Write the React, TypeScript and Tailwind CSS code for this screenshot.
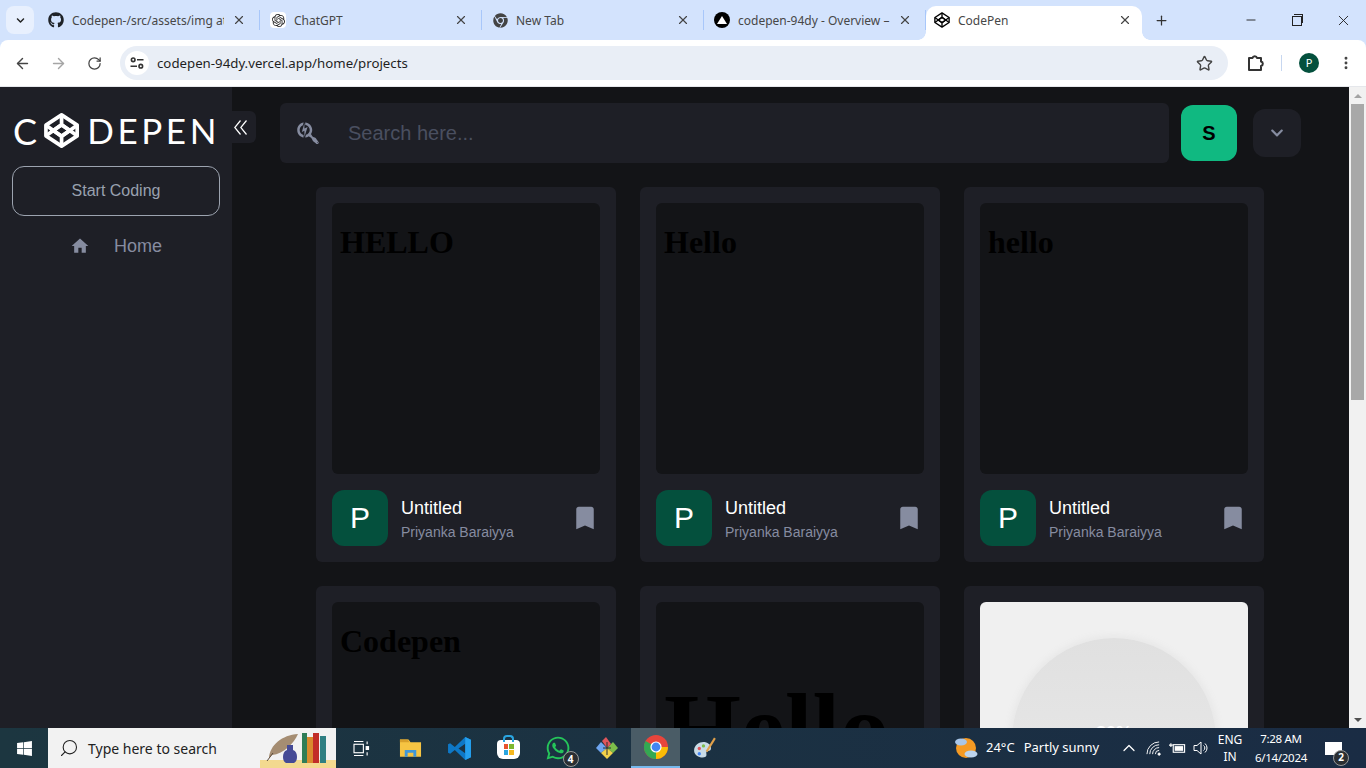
import { ArrowLeft, ArrowRight, ChevronUp, Minus, MoreVertical, Plus, RotateCw, Search, Star, X } from 'lucide-react';
import { FaChevronDown, FaChrome, FaGithub, FaSearchengin, FaWhatsapp, FaWindows } from 'react-icons/fa';
import { MdBookmark, MdHome } from 'react-icons/md';
import { SiOpenai } from 'react-icons/si';

const chromeFont = { fontFamily: '"Noto Sans", sans-serif' };

function CodepenMark({ className, strokeWidth = 2 }: { className?: string; strokeWidth?: number }) {
  return (
    <svg viewBox="0 0 36 36" className={className} fill="none" stroke="currentColor" strokeWidth={strokeWidth} strokeLinejoin="round">
      <path d="M18 2 34 12.5V23.5L18 34 2 23.5V12.5Z" />
      <path d="M18 12 26.5 18 18 24 9.5 18Z" />
      <path d="M18 2V12M18 24V34M2 12.5 18 24M34 12.5 18 24M2 23.5 18 12M34 23.5 18 12" />
    </svg>
  );
}

function Tab({ title, icon, active }: { title: string; icon: React.ReactNode; active?: boolean }) {
  if (active) {
    return (
      <div className="relative flex items-center w-[216px] h-[34px] pb-[6px] pl-2 pr-[10px] gap-2 bg-white rounded-t-[10px]">
        <div className="absolute -left-2 bottom-0 w-2 h-2 bg-[radial-gradient(circle_at_0_0,transparent_7.5px,white_8px)]" />
        <div className="absolute -right-2 bottom-0 w-2 h-2 bg-[radial-gradient(circle_at_100%_0,transparent_7.5px,white_8px)]" />
        <div className="w-4 h-4 flex items-center justify-center shrink-0">{icon}</div>
        <div className="flex-1 overflow-hidden whitespace-nowrap text-xs text-[#474747] mt-[2px]">{title}</div>
        <X size={14} strokeWidth={2} className="text-[#444] shrink-0" />
      </div>
    );
  }
  return (
    <div className="flex items-center w-[222px] h-[34px] pb-[6px] pl-[10px] pr-3 gap-2">
      <div className="w-4 h-4 flex items-center justify-center shrink-0">{icon}</div>
      <div className="flex-1 overflow-hidden whitespace-nowrap text-xs text-[#474747] mt-[2px]">{title}</div>
      <X size={14} strokeWidth={2} className="text-[#444] shrink-0" />
      <div className="w-px h-5 bg-[#a8c7fa] -mr-3 ml-[5px]" />
    </div>
  );
}

function TabStrip() {
  return (
    <div className="flex items-end h-10 pl-[6px]" style={chromeFont}>
      <div className="w-7 h-7 mb-[6px] mr-1 rounded-lg bg-[#e8f0fe] flex items-center justify-center">
        <FaChevronDown size={9} className="text-[#222]" />
      </div>
      <Tab title="Codepen-/src/assets/img at" icon={<FaGithub size={16} className="text-[#1f2328]" />} />
      <Tab title="ChatGPT" icon={<div className="w-4 h-4 bg-white rounded-sm flex items-center justify-center"><SiOpenai size={13} className="text-[#222]" /></div>} />
      <Tab title="New Tab" icon={<FaChrome size={15} className="text-[#444]" />} />
      <Tab
        title="codepen-94dy - Overview –"
        icon={
          <div className="w-4 h-4 bg-black rounded-full flex items-center justify-center">
            <div className="w-0 h-0 border-l-[5px] border-r-[5px] border-b-[8px] border-l-transparent border-r-transparent border-b-white" />
          </div>
        }
      />
      <Tab title="CodePen" active icon={<CodepenMark className="w-4 h-4 text-black" strokeWidth={3} />} />
      <div className="w-[38px] h-[34px] pb-[6px] flex items-center justify-center">
        <Plus size={15} strokeWidth={2} className="text-[#333]" />
      </div>
      <div className="ml-auto flex h-10 items-center text-[#222]">
        <div className="w-[46px] flex justify-center"><Minus size={14} strokeWidth={1.6} /></div>
        <div className="w-[46px] flex justify-center">
          <div className="relative w-[10px] h-[10px] border border-[#222] mt-[2px]">
            <div className="absolute -top-[3px] left-[1px] w-[9px] h-[9px] border-t border-r border-[#222]" />
          </div>
        </div>
        <div className="w-[46px] flex justify-center"><X size={17} strokeWidth={1.3} /></div>
      </div>
    </div>
  );
}

function Toolbar() {
  return (
    <div className="flex items-center h-[47px] bg-white rounded-t-lg border-b border-[#e5e7eb]" style={chromeFont}>
      <div className="w-[44px] flex justify-center"><ArrowLeft size={17} strokeWidth={2} className="text-[#444]" /></div>
      <div className="w-[28px] flex justify-center"><ArrowRight size={17} strokeWidth={2} className="text-[#a5a5a5]" /></div>
      <div className="w-[44px] flex justify-center"><RotateCw size={15} strokeWidth={2} className="text-[#444]" /></div>
      <div className="flex items-center w-[1108px] h-[34px] ml-1 rounded-full bg-[#e9eef6] pl-[5px] pr-[15px]">
        <div className="w-6 h-6 rounded-full bg-white flex items-center justify-center">
          <svg viewBox="0 0 14 14" className="w-[14px] h-[14px]" fill="none" stroke="#333" strokeWidth="1.6">
            <circle cx="3.2" cy="3.8" r="1.8" />
            <path d="M7 3.800h6.500M.5 10.200H7" />
            <circle cx="10.800" cy="10.200" r="1.8" />
          </svg>
        </div>
        <div className="ml-2 flex-1 text-[13.25px] text-[#1f1f1f] mt-[2px]">codepen-94dy.vercel.app/home/projects</div>
        <Star size={17} strokeWidth={2} className="text-[#444]" />
      </div>
      <div className="w-[52px] ml-[1px] flex justify-center">
        <svg viewBox="0 0 18 18" className="w-[18px] h-[18px]" fill="none" stroke="#333" strokeWidth="2" strokeLinejoin="round">
          <path d="M3 4h3.500a2.300 2.300 0 0 1 4.500 0H15v3.500a2.300 2.300 0 0 1 0 4.500V16H3z" />
        </svg>
      </div>
      <div className="w-px h-4 bg-[#c7d7f0]" />
      <div className="w-[54px] flex justify-center">
        <div className="w-5 h-5 rounded-full bg-[#04503d] text-white text-[11px] flex items-center justify-center">P</div>
      </div>
      <div className="w-[20px] flex justify-center"><MoreVertical size={16} strokeWidth={2.4} className="text-[#444]" /></div>
    </div>
  );
}

function Sidebar() {
  return (
    <aside className="relative z-10 w-[232px] shrink-0 bg-[#1e1f26] px-3 pt-[25px]">
      <div className="flex items-center h-[37px] pl-[1px] text-white font-normal whitespace-nowrap" style={{ fontFamily: 'Lato, sans-serif' }}>
        <span className="text-[36px] leading-none">C</span>
        <CodepenMark className="w-[37px] h-[37px] ml-[7px] text-white" strokeWidth={3.8} />
        <span className="text-[35px] leading-none tracking-[3.6px] ml-2">DEPEN</span>
      </div>
      <div className="absolute top-6 -right-6 w-6 h-8 bg-[#1e1f26] rounded-r-md flex items-center pl-[2px]">
        <svg viewBox="0 0 13 15" className="w-[13px] h-[15px]" fill="none" stroke="white" strokeWidth="1.2">
          <path d="M6.500.5 0.800 7.500 6.500 14.500M12.500.5 6.800 7.500 12.500 14.500" />
        </svg>
      </div>
      <div className="mt-[17px] h-[50px] rounded-xl border border-[#9ca3af] flex items-center justify-center text-gray-400">
        Start Coding
      </div>
      <div className="mt-4 flex items-center gap-6 pl-[58px] text-[#868ca0] text-lg">
        <MdHome size={20} />
        <span>Home</span>
      </div>
    </aside>
  );
}

interface ProjectCardProps {
  preview: React.ReactNode;
  previewClass?: string;
}

function ProjectCard({ preview, previewClass }: ProjectCardProps) {
  return (
    <div className="w-[300px] h-[375px] p-4 bg-[#1e1f26] rounded-md flex flex-col gap-4">
      <div className={`h-[271px] rounded-md overflow-hidden ${previewClass ?? 'bg-[#131417]'}`} style={{ fontFamily: '"Liberation Serif", serif' }}>
        {preview}
      </div>
      <div className="flex items-center h-14">
        <div className="w-14 h-14 rounded-xl bg-[#04503d] text-white text-3xl flex items-center justify-center">P</div>
        <div className="ml-[13px] flex-1">
          <p className="text-white text-lg leading-[26px] mt-[1px]">Untitled</p>
          <p className="text-[#868ca0] text-sm mt-[1px]">Priyanka Baraiyya</p>
        </div>
        <MdBookmark size={30} className="text-[#868ca0]" />
      </div>
    </div>
  );
}

function Heading({ text }: { text: string }) {
  return <h1 className="pt-[21px] pl-2 text-[32px] font-bold text-black leading-[37px]">{text}</h1>;
}

function Main() {
  return (
    <main className="flex-1 min-w-0 bg-[#131417] px-12 pt-4 overflow-hidden">
      <div className="flex items-center h-[60px]">
        <div className="flex-1 h-[60px] bg-[#1e1f26] rounded-md flex items-center pl-4 gap-7">
          <FaSearchengin size={24} className="text-[#868ca0] shrink-0" />
          <input placeholder="Search here..." className="flex-1 bg-transparent text-xl outline-none placeholder:text-[#4a4f60]" />
        </div>
        <div className="ml-3 w-14 h-14 rounded-xl bg-[#10b981] flex items-center justify-center text-black text-xl font-semibold">S</div>
        <div className="ml-4 w-12 h-12 rounded-xl bg-[#1e1f26] flex items-center justify-center">
          <FaChevronDown size={14} className="text-[#868ca0]" />
        </div>
      </div>

      <div className="mt-6 pl-9 grid grid-cols-[repeat(3,300px)] gap-6">
        <ProjectCard preview={<Heading text="HELLO" />} />
        <ProjectCard preview={<Heading text="Hello" />} />
        <ProjectCard preview={<Heading text="hello" />} />
        <ProjectCard preview={<Heading text="Codepen" />} />
        <ProjectCard preview={<h1 className="pt-[71px] pl-2 text-[99px] font-bold text-black leading-[112px]">Hello</h1>} />
        <ProjectCard
          previewClass="bg-[#f0f0f0]"
          preview={
            <div className="mt-[36px] mx-auto w-[204px] h-[204px] rounded-full bg-gradient-to-b from-[#e0e0e0] to-[#ebebeb] shadow-[0_0_6px_3px_#e8e8e8] pt-[81px] text-center text-white text-lg font-bold" style={{ fontFamily: '"Liberation Sans", sans-serif' }}>
              30%
            </div>
          }
        />
      </div>
    </main>
  );
}

function Scrollbar() {
  return (
    <div className="w-[17px] shrink-0 bg-[#f1f1f1] flex flex-col">
      <div className="h-[17px] flex items-center justify-center">
        <div className="w-0 h-0 border-l-4 border-r-4 border-b-4 border-l-transparent border-r-transparent border-b-[#a3a3a3]" />
      </div>
      <div className="h-[296px] mx-[2px] bg-[#a8a8a8]" />
      <div className="flex-1" />
      <div className="h-[17px] flex items-center justify-center">
        <div className="w-0 h-0 border-l-4 border-r-4 border-t-4 border-l-transparent border-r-transparent border-t-[#505050]" />
      </div>
    </div>
  );
}

function BooksArt() {
  return (
    <svg viewBox="0 0 76 40" className="w-[76px] h-10 shrink-0">
      <rect x="0" y="32" width="76" height="8" fill="#f3d98f" />
      <path d="M9 30C10 17 22 7 38 6 34 15 24 26 12 27Z" fill="#a58d72" />
      <path d="M7 33 13 25" stroke="#5b4a3a" strokeWidth="1" />
      <path d="M27 17h6v5c3 1 4 4 4 7 0 3-1 5-3 6h-8c-2-1-3-3-3-6 0-3 1-6 4-7z" fill="#454a96" />
      <rect x="42" y="5" width="5" height="30" fill="#2f7d57" />
      <rect x="47" y="9" width="6" height="26" fill="#d98a2e" />
      <rect x="53" y="5" width="6" height="30" fill="#c22d28" />
      <rect x="60" y="8" width="6" height="27" fill="#2f7f82" />
    </svg>
  );
}

function TaskIcon({ children }: { children: React.ReactNode }) {
  return <div className="w-[49px] h-10 flex items-center justify-center">{children}</div>;
}

function Taskbar() {
  return (
    <div className="flex items-center h-10 bg-gradient-to-r from-[#1c3640] to-[#1a2c44] text-white" style={chromeFont}>
      <div className="w-12 flex justify-center"><FaWindows size={17} /></div>
      <div className="w-[288px] h-10 bg-[#f2f2f2] flex items-center pl-[11px] text-[#222]">
        <Search size={20} strokeWidth={1.3} className="-scale-x-100 mr-[9px]" />
        <span className="text-[14px] flex-1">Type here to search</span>
        <BooksArt />
      </div>
      <div className="ml-[1px] flex">
        <TaskIcon>
          <svg viewBox="0 0 18 16" className="w-[17px] h-[15px]" fill="none" stroke="white" strokeWidth="1.2">
            <path d="M1 .5h10M1 15.500h10" />
            <rect x="1" y="3.500" width="10" height="9" />
            <path d="M15 .5v3M15 12v3.500" />
            <rect x="14" y="6" width="2.500" height="3" fill="white" />
          </svg>
        </TaskIcon>
        <TaskIcon>
          <svg viewBox="0 0 24 20" className="w-[23px] h-[20px]">
            <path d="M1 1h9l2 3h11v15H1z" fill="#f6c443" />
            <path d="M1 1h8l2 3H1z" fill="#d9a02b" />
            <path d="M6 19v-7h12v7h-3v-4H9v4z" fill="#3f97d9" />
          </svg>
        </TaskIcon>
        <TaskIcon>
          <svg viewBox="0 0 24 24" className="w-[25px] h-[25px]">
            <path d="M17.500 1 7.500 10.500 3 7 1 8v8l2 1 4.500-3.500L17.500 23 23 20.500v-17zM17.500 7.500 11 12l6.500 4.500z" fillRule="evenodd" fill="#0e78c6" />
            <path d="M17.500 1 23 3.500v17L17.500 23z" fill="#25a0ee" />
          </svg>
        </TaskIcon>
        <TaskIcon>
          <div className="relative w-[23px] h-[19px] mt-[3px] bg-white rounded-b-md rounded-t-sm flex items-center justify-center">
            <div className="absolute -top-[5px] left-[6px] w-[11px] h-[7px] border-2 border-b-0 border-[#2aa5e0] rounded-t-sm" />
            <div className="grid grid-cols-2 gap-px w-[10px]">
              <div className="h-[5px] bg-[#e8532c]" />
              <div className="h-[5px] bg-[#7db72f]" />
              <div className="h-[5px] bg-[#2aa5e0]" />
              <div className="h-[5px] bg-[#f6b81f]" />
            </div>
          </div>
        </TaskIcon>
        <TaskIcon>
          <div className="relative">
            <FaWhatsapp size={26} className="text-[#25c55a]" />
            <div className="absolute -right-[8px] -bottom-[6px] w-4 h-4 rounded-full bg-[#2b2f33] border border-[#999] text-white text-[10px] font-bold flex items-center justify-center">4</div>
          </div>
        </TaskIcon>
        <TaskIcon>
          <svg viewBox="0 0 24 24" className="w-6 h-6">
            <path d="M12 12 6 6 1 12l5 5z" fill="#6ea5f0" />
            <path d="M12 12 18 6l5 6-5 5z" fill="#7dbd4a" />
            <path d="M12 12 6 17l6 6 6-6z" fill="#f2d24a" />
            <path d="M12 12 7 5l4-4 5 7z" fill="#e0565b" />
            <path d="M12 6v13M8 12h8" stroke="#2b2f33" strokeWidth="1" />
          </svg>
        </TaskIcon>
        <div className="w-[49px] h-10 bg-[#4a5c66] border-b-2 border-[#76b9ed] flex items-center justify-center">
          <svg viewBox="0 0 24 24" className="w-6 h-6">
            <circle cx="12" cy="12" r="12" fill="#e8453c" />
            <path d="M12 12 1.600 6A12 12 0 0 0 12 24z" fill="#34a853" />
            <path d="M12 12h12A12 12 0 0 1 12 24z" fill="#fbbc05" />
            <circle cx="12" cy="12" r="5.600" fill="white" />
            <circle cx="12" cy="12" r="4.400" fill="#4285f4" />
          </svg>
        </div>
        <TaskIcon>
          <svg viewBox="0 0 24 24" className="w-[25px] h-[25px]">
            <path d="M2 14C2 8 8 5 13 6c4 1 6 4 5 7-1 2-3 1-4 2s1 3-1 5c-3 2-11 0-11-6z" fill="#c9dbe6" />
            <circle cx="7" cy="12" r="1.600" fill="#e0565b" />
            <circle cx="11" cy="9.500" r="1.600" fill="#7dbd4a" />
            <circle cx="7" cy="17" r="1.600" fill="#4285f4" />
            <path d="M22 2 14 15" stroke="#e0a04a" strokeWidth="2" />
          </svg>
        </TaskIcon>
      </div>

      <div className="ml-auto flex items-center h-10">
        <div className="w-[163px] flex items-center text-[13px] whitespace-nowrap">
          <svg viewBox="0 0 24 24" className="w-6 h-6 shrink-0">
            <circle cx="12" cy="12" r="10" fill="#f59a23" />
            <ellipse cx="7" cy="6" rx="6" ry="3.500" fill="#a9c6e8" />
            <ellipse cx="17" cy="18" rx="6.500" ry="3.500" fill="#bcd4ee" />
          </svg>
          <span className="ml-2">24°C</span>
          <span className="ml-[9px]">Partly sunny</span>
        </div>
        <div className="w-6 flex justify-center"><ChevronUp size={20} strokeWidth={1.5} /></div>
        <div className="w-6 flex justify-center">
          <svg viewBox="0 0 16 16" className="w-[15px] h-[15px]" fill="none" stroke="white" strokeWidth="1">
            <path d="M1 14A13 13 0 0 1 14 1M4 14A10 10 0 0 1 14 4M7 14A7 7 0 0 1 14 7M10 14A4 4 0 0 1 14 10" />
            <circle cx="14" cy="14" r="1.200" fill="white" />
          </svg>
        </div>
        <div className="w-6 flex justify-center">
          <svg viewBox="0 0 18 12" className="w-[17px] h-3" fill="none" stroke="white" strokeWidth="1.2">
            <rect x="4.500" y="2.500" width="12" height="8" />
            <rect x="6" y="4" width="9" height="5" fill="white" stroke="none" />
            <path d="M0 3h4M2 1v4" />
          </svg>
        </div>
        <div className="w-6 flex justify-center">
          <svg viewBox="0 0 16 16" className="w-4 h-4" fill="none" stroke="white" strokeWidth="1">
            <path d="M1 5.500h3L8 2v12L4 10.500H1z" />
            <path d="M10.500 5.500a3 3 0 0 1 0 5M12 3.500a6 6 0 0 1 0 9" />
          </svg>
        </div>
        <div className="w-[34px] text-center text-xs leading-[17px]">ENG<br />IN</div>
        <div className="w-[68px] text-center text-[11.5px] tracking-[-0.3px] leading-[19px]">7:28 AM<br />6/14/2024</div>
        <div className="w-[51px] pl-[10px]">
          <div className="relative w-[17px] h-[13px] bg-white">
            <div className="absolute -right-[7px] -bottom-[11px] w-4 h-4 rounded-full bg-[#2b2f33] border border-[#999] text-[10px] font-bold flex items-center justify-center">2</div>
          </div>
        </div>
      </div>
    </div>
  );
}

export default function App() {
  return (
    <div className="h-screen flex flex-col overflow-hidden bg-[#d3e3fd]" style={{ fontFamily: '"Liberation Sans", sans-serif' }}>
      <TabStrip />
      <Toolbar />
      <div className="flex-1 min-h-0 flex">
        <Sidebar />
        <Main />
        <Scrollbar />
      </div>
      <Taskbar />
    </div>
  );
}
